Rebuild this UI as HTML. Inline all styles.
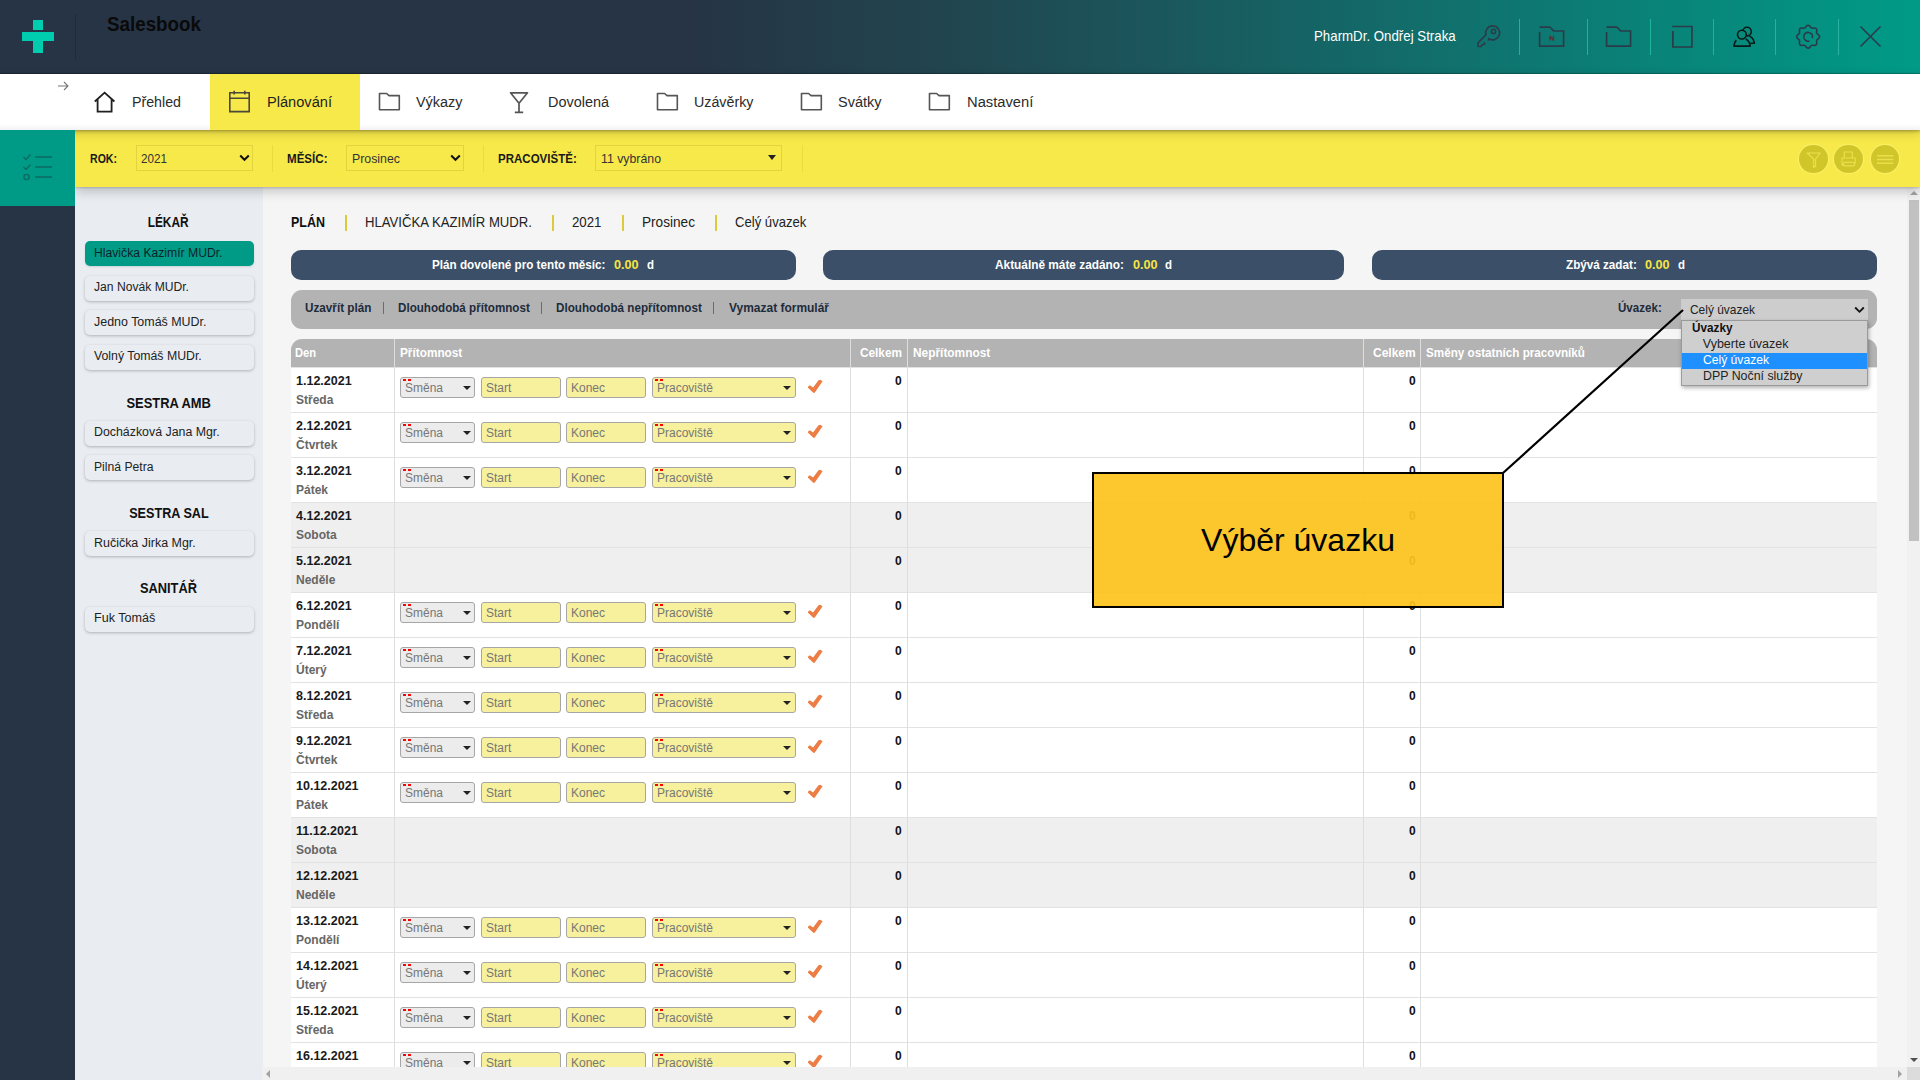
<!DOCTYPE html><html><head><meta charset="utf-8"><style>
*{box-sizing:border-box;margin:0;padding:0}
html,body{width:1920px;height:1080px;overflow:hidden;font-family:"Liberation Sans",sans-serif;background:#f5f5f5;color:#212529}
.abs{position:absolute}
.t{position:absolute;white-space:nowrap}
.t>span{display:inline-block;transform-origin:0 50%}
.tc>span{transform-origin:50% 50%}
#hdr{position:absolute;left:0;top:0;width:1920px;height:74px;background:linear-gradient(90deg,#263445 0%,#263445 36%,#214650 50%,#136a69 72%,#009b87 100%);}
#hdrb{position:absolute;left:0;top:73px;width:1920px;height:1px;background:rgba(0,0,0,.18)}
#nav{position:absolute;left:0;top:74px;width:1920px;height:56px;background:linear-gradient(180deg,#fff 0,#fff 50px,#f3f3f6 56px);z-index:6;box-shadow:0 1px 3px rgba(0,0,0,.3),0 3px 10px rgba(0,0,0,.18)}
#filt{position:absolute;left:75px;top:130px;width:1845px;height:57px;background:#f7e94a;box-shadow:0 1px 2px rgba(0,0,0,.15),0 4px 11px rgba(0,0,0,.22);z-index:5}
#lteal{position:absolute;left:0;top:130px;width:75px;height:76px;background:#009b87;z-index:7}
#ldark{position:absolute;left:0;top:206px;width:75px;height:874px;background:#263445;z-index:7}
#emp{position:absolute;left:75px;top:187px;width:188px;height:893px;background:#e9edf1}
.z8{z-index:8}.z9{z-index:9}
.fsel{position:absolute;top:145px;height:26px;border:1px solid #e2d43e;z-index:9}
.fdiv{position:absolute;top:145px;width:1px;height:27px;background:#e9dc40;z-index:9}
.eb{position:absolute;left:85px;width:169px;height:25px;border-radius:5px;background:#e9edf1;box-shadow:0 1px 3px rgba(0,0,0,.25)}
.eb.act{background:#009b87;box-shadow:0 1px 2px rgba(0,0,0,.12)}
.bsep{position:absolute;top:215px;width:1.6px;height:16px;background:#dccb38}
.info{position:absolute;top:250px;height:30px;background:#3b5068;border-radius:10px}
#act{position:absolute;left:291px;top:290px;width:1586px;height:39px;background:#b3b3b3;border-radius:11px}
.asep{position:absolute;top:302px;width:1px;height:12px;background:#6a6a7a}
#thd{position:absolute;left:291px;top:339px;width:1586px;height:28px;background:#b3b3b3;border-radius:11px 11px 0 0}
.tdiv{position:absolute;width:1px;background:#dedede}
.row{position:absolute;left:291px;width:1586px;height:45px;background:#fff;border-top:1px solid #e2e2e2}
.row.we{background:#efefef}
.d1{position:absolute;left:5px;top:6px;font-size:12.5px;font-weight:bold;color:#1a1a1a;line-height:15px}
.d2{position:absolute;left:5px;top:25px;font-size:12px;font-weight:bold;color:#666;line-height:15px}
.z{position:absolute;top:6px;font-size:12px;font-weight:bold;color:#111;line-height:15px}
.inp{position:absolute;top:9px;height:21px;border:1px solid #a6a6a6;border-radius:3px;font-size:12px;color:#777;line-height:21px;padding-left:4px}
.sel{background:#ececec}
.yel{background:#f7f09c}
.tri{position:absolute;top:8px;width:0;height:0;border-left:4px solid transparent;border-right:4px solid transparent;border-top:4px solid #222}
.rd{position:absolute;left:2px;top:1px;width:8px;height:2px;background:linear-gradient(90deg,#f00 0,#f00 3px,transparent 3px,transparent 5px,#f00 5px,#f00 8px)}
.chk{position:absolute;left:516px;top:11px}
</style></head><body><div id="hdr"></div><div id="hdrb"></div>
<svg class="abs" style="left:22px;top:20px" width="32" height="33" viewBox="0 0 32 33"><rect x="11" y="0" width="10" height="10" fill="#00cdb0"/><rect x="0" y="12" width="32" height="9" fill="#00cdb0"/><rect x="11" y="21" width="10" height="12" fill="#00cdb0"/></svg>
<div class="abs" style="left:75px;top:14px;width:1px;height:46px;background:#1f2b39"></div>
<div class="t" style="top:11.30px;font-size:20.8px;line-height:25px;color:#0a0a0a;font-weight:bold;left:107px;"><span id="t0" style="transform:scaleX(0.9036)">Salesbook</span></div>
<div class="t" style="top:26.80px;font-size:14.2px;line-height:18px;color:#fff;left:1314px;"><span id="t1" style="transform:scaleX(0.9360)">PharmDr. Ondřej Straka</span></div>
<div class="abs" style="left:1519px;top:19px;width:1px;height:36px;background:rgba(40,200,170,.72)"></div>
<div class="abs" style="left:1587px;top:19px;width:1px;height:36px;background:rgba(40,200,170,.72)"></div>
<div class="abs" style="left:1650px;top:19px;width:1px;height:36px;background:rgba(40,200,170,.72)"></div>
<div class="abs" style="left:1713px;top:19px;width:1px;height:36px;background:rgba(90,215,195,.45)"></div>
<div class="abs" style="left:1775px;top:19px;width:1px;height:36px;background:rgba(90,215,195,.45)"></div>
<div class="abs" style="left:1838px;top:19px;width:1px;height:36px;background:rgba(90,215,195,.45)"></div>
<svg class="abs" style="left:1472px;top:20px" width="32" height="32" viewBox="0 0 32 32"><path d="M13.9 14.8 A7 7 0 1 1 16.9 18.8 Q16.6 19.6 16.4 20" fill="none" stroke="#2a3c4a" stroke-width="1.6" stroke-linecap="round"/><path d="M12.4 21.9 V24.3 L9.9 25 L9 26.5 H6 V22.9 L13.9 14.8" fill="none" stroke="#2a3c4a" stroke-width="1.6" stroke-linejoin="round"/><circle cx="21.5" cy="11.4" r="2.1" fill="none" stroke="#2a3c4a" stroke-width="1.5"/></svg>
<svg class="abs" style="left:1536px;top:20px" width="32" height="32" viewBox="0 0 32 32"><path d="M3.6 7.1 H13.3 Q14.5 7.1 15.5 8.6 L16.4 9.8 Q17.2 11 18.5 11 H27.6 V26.1 H3.6 V12.1" fill="none" stroke="#2a3c4a" stroke-width="1.7"/><path d="M14 20.6 V15.9 L17.4 20.6 V15.9" fill="none" stroke="#5a3434" stroke-width="1.5" stroke-linejoin="bevel"/></svg>
<svg class="abs" style="left:1603px;top:20px" width="32" height="32" viewBox="0 0 32 32"><path d="M3.6 7.1 H13.3 Q14.5 7.1 15.5 8.6 L16.4 9.8 Q17.2 11 18.5 11 H27.6 V26.1 H3.6 V12.1" fill="none" stroke="#2a3c4a" stroke-width="1.7"/></svg>
<svg class="abs" style="left:1671px;top:25px" width="23" height="24" viewBox="0 0 23 24"><path d="M1.2 1.5 H20.9 V22 H1.9 V6" fill="none" stroke="#2a3c4a" stroke-width="1.7"/></svg>
<svg class="abs" style="left:1728px;top:20px" width="32" height="32" viewBox="0 0 32 32"><circle cx="19" cy="11.6" r="4.3" fill="none" stroke="#0a1a18" stroke-width="1.6"/><path d="M21.3 16.2 Q25.6 17.6 26.4 23.2 H22.5" fill="none" stroke="#0a1a18" stroke-width="1.6" stroke-linejoin="round"/><circle cx="13.9" cy="14.6" r="4.4" fill="#078a7a" stroke="#0a1a18" stroke-width="1.6"/><path d="M8.3 20.1 Q6.2 22.3 5.9 26.1 H22.2 Q21.8 21.2 17.8 19" fill="none" stroke="#0a1a18" stroke-width="1.6" stroke-linejoin="round"/></svg>
<svg class="abs" style="left:1792px;top:20px" width="32" height="32" viewBox="0 0 32 32"><path d="M27.55 16.70 L27.39 17.44 L26.93 18.13 L26.30 18.73 L25.64 19.26 L25.09 19.75 L24.74 20.28 L24.61 20.90 L24.65 21.64 L24.75 22.48 L24.77 23.35 L24.60 24.16 L24.20 24.80 L23.56 25.20 L22.75 25.37 L21.88 25.35 L21.04 25.25 L20.30 25.21 L19.68 25.34 L19.15 25.69 L18.66 26.24 L18.13 26.90 L17.53 27.53 L16.84 27.99 L16.10 28.15 L15.36 27.99 L14.67 27.53 L14.07 26.90 L13.54 26.24 L13.05 25.69 L12.52 25.34 L11.90 25.21 L11.16 25.25 L10.32 25.35 L9.45 25.37 L8.64 25.20 L8.00 24.80 L7.60 24.16 L7.43 23.35 L7.45 22.48 L7.55 21.64 L7.59 20.90 L7.46 20.28 L7.11 19.75 L6.56 19.26 L5.90 18.73 L5.27 18.13 L4.81 17.44 L4.65 16.70 L4.81 15.96 L5.27 15.27 L5.90 14.67 L6.56 14.14 L7.11 13.65 L7.46 13.12 L7.59 12.50 L7.55 11.76 L7.45 10.92 L7.43 10.05 L7.60 9.24 L8.00 8.60 L8.64 8.20 L9.45 8.03 L10.32 8.05 L11.16 8.15 L11.90 8.19 L12.52 8.06 L13.05 7.71 L13.54 7.16 L14.07 6.50 L14.67 5.87 L15.36 5.41 L16.10 5.25 L16.84 5.41 L17.53 5.87 L18.13 6.50 L18.66 7.16 L19.15 7.71 L19.68 8.06 L20.30 8.19 L21.04 8.15 L21.88 8.05 L22.75 8.03 L23.56 8.20 L24.20 8.60 L24.60 9.24 L24.77 10.05 L24.75 10.92 L24.65 11.76 L24.61 12.50 L24.74 13.12 L25.09 13.65 L25.64 14.14 L26.30 14.67 L26.93 15.27 L27.39 15.96 Z" fill="none" stroke="#2a3c4a" stroke-width="1.6" stroke-linejoin="round"/><path d="M20.3 18.3 A4.4 4.4 0 1 0 17.5 21" fill="none" stroke="#2a3c4a" stroke-width="1.6"/></svg>
<svg class="abs" style="left:1859px;top:25px" width="23" height="23" viewBox="0 0 23 23"><path d="M1.5 1.5 L21.5 21.5 M21.5 1.5 L1.5 21.5" stroke="#2a3c4a" stroke-width="1.6"/></svg>
<div id="nav"></div>
<div class="abs" style="left:210px;top:74px;width:150px;height:56px;background:#f7e94a;z-index:7"></div>
<svg class="abs z8" style="left:56px;top:80px" width="14" height="12" viewBox="0 0 14 12"><path d="M2 6 H12 M8 2 L12 6 L8 10" fill="none" stroke="#777" stroke-width="1.1"/></svg>
<svg class="abs z8" style="left:93px;top:91px" width="24" height="22" viewBox="0 0 24 22"><path d="M1.8 10.5 L11.6 1.6 L21.4 10.5 M4.6 8.5 V20.6 H18.6 V8.5" fill="none" stroke="#1f1f1f" stroke-width="1.8" stroke-linejoin="miter"/></svg>
<div class="t z8" style="top:92.20px;font-size:15.2px;line-height:19px;color:#2b2b2b;left:132px;"><span id="t2" style="transform:scaleX(0.9358)">Přehled</span></div>
<svg class="abs z8" style="left:228px;top:90px" width="24" height="23" viewBox="0 0 24 23"><path d="M1.8 2.8 H21.2 V21.6 H1.8 Z M1.8 8.2 H21.2 M6.2 0.8 V4.5 M16.8 0.8 V4.5" fill="none" stroke="#4a4836" stroke-width="1.6"/></svg>
<div class="t z8" style="top:92.20px;font-size:15.2px;line-height:19px;color:#1f1f1f;left:266.7px;"><span id="t3" style="transform:scaleX(0.9621)">Plánování</span></div>
<svg class="abs z8" style="left:378px;top:92px" width="23" height="20" viewBox="0 0 23 20"><path d="M1.5 1.5 H8.6 L11 3.6 H21.3 V17.8 H1.5 Z" fill="none" stroke="#555" stroke-width="1.6" stroke-linejoin="round"/></svg>
<div class="t z8" style="top:92.20px;font-size:15.2px;line-height:19px;color:#2b2b2b;left:416.3px;"><span id="t4" style="transform:scaleX(0.9499)">Výkazy</span></div>
<svg class="abs z8" style="left:508px;top:91px" width="22" height="23" viewBox="0 0 22 23"><path d="M2.5 1.8 H19.5 L11 12.2 Z M11 12.2 V21.3 M6.8 21.3 H15.2" fill="none" stroke="#555" stroke-width="1.7" stroke-linejoin="round"/></svg>
<div class="t z8" style="top:92.20px;font-size:15.2px;line-height:19px;color:#2b2b2b;left:547.6px;"><span id="t5" style="transform:scaleX(0.9506)">Dovolená</span></div>
<svg class="abs z8" style="left:656px;top:92px" width="23" height="20" viewBox="0 0 23 20"><path d="M1.5 1.5 H8.6 L11 3.6 H21.3 V17.8 H1.5 Z" fill="none" stroke="#555" stroke-width="1.6" stroke-linejoin="round"/></svg>
<div class="t z8" style="top:92.20px;font-size:15.2px;line-height:19px;color:#2b2b2b;left:694px;"><span id="t6" style="transform:scaleX(0.9384)">Uzávěrky</span></div>
<svg class="abs z8" style="left:800px;top:92px" width="23" height="20" viewBox="0 0 23 20"><path d="M1.5 1.5 H8.6 L11 3.6 H21.3 V17.8 H1.5 Z" fill="none" stroke="#555" stroke-width="1.6" stroke-linejoin="round"/></svg>
<div class="t z8" style="top:92.20px;font-size:15.2px;line-height:19px;color:#2b2b2b;left:838.2px;"><span id="t7" style="transform:scaleX(0.9544)">Svátky</span></div>
<svg class="abs z8" style="left:928px;top:92px" width="23" height="20" viewBox="0 0 23 20"><path d="M1.5 1.5 H8.6 L11 3.6 H21.3 V17.8 H1.5 Z" fill="none" stroke="#555" stroke-width="1.6" stroke-linejoin="round"/></svg>
<div class="t z8" style="top:92.20px;font-size:15.2px;line-height:19px;color:#2b2b2b;left:966.7px;"><span id="t8" style="transform:scaleX(0.9694)">Nastavení</span></div>
<div id="lteal"></div><div id="ldark"></div>
<svg class="abs" style="left:22px;top:153px;z-index:8" width="32" height="28" viewBox="0 0 32 28"><path d="M1.5 4 L4 6.5 L8.5 1.5 M1.5 14 L4 16.5 L8.5 11.5" fill="none" stroke="#0b6b60" stroke-width="1.4"/><circle cx="4.5" cy="24" r="2.6" fill="none" stroke="#0b6b60" stroke-width="1.4"/><path d="M13 4 H30 M13 14 H30 M13 24 H30" stroke="#0b6b60" stroke-width="1.4"/></svg>
<div id="filt"></div>
<div class="t z9" style="top:149.70px;font-size:13.4px;line-height:17px;color:#1a1a1a;font-weight:bold;left:89.6px;"><span id="t9" style="transform:scaleX(0.7890)">ROK:</span></div>
<div class="fsel" style="left:136px;width:117px"></div>
<div class="t z9" style="top:150.70px;font-size:12.6px;line-height:16px;color:#333;left:141px;"><span id="t10" style="transform:scaleX(0.9275)">2021</span></div>
<svg class="abs z9" style="left:238.5px;top:154px" width="11" height="8" viewBox="0 0 11 8"><path d="M1.2 1.5 L5.5 5.8 L9.8 1.5" fill="none" stroke="#111" stroke-width="2"/></svg>
<div class="fdiv" style="left:272px"></div>
<div class="t z9" style="top:149.70px;font-size:13.4px;line-height:17px;color:#1a1a1a;font-weight:bold;left:287px;"><span id="t11" style="transform:scaleX(0.8640)">MĚSÍC:</span></div>
<div class="fsel" style="left:346px;width:118px"></div>
<div class="t z9" style="top:150.70px;font-size:12.6px;line-height:16px;color:#333;left:351.7px;"><span id="t12" style="transform:scaleX(0.9796)">Prosinec</span></div>
<svg class="abs z9" style="left:450px;top:154px" width="11" height="8" viewBox="0 0 11 8"><path d="M1.2 1.5 L5.5 5.8 L9.8 1.5" fill="none" stroke="#111" stroke-width="2"/></svg>
<div class="fdiv" style="left:483px"></div>
<div class="t z9" style="top:149.70px;font-size:13.4px;line-height:17px;color:#1a1a1a;font-weight:bold;left:497.5px;"><span id="t13" style="transform:scaleX(0.8605)">PRACOVIŠTĚ:</span></div>
<div class="fsel" style="left:595px;width:187px"></div>
<div class="t z9" style="top:150.70px;font-size:12.6px;line-height:16px;color:#333;left:601px;"><span id="t14" style="transform:scaleX(0.9773)">11 vybráno</span></div>
<div class="abs z9" style="left:768px;top:155px;width:0;height:0;border-left:4px solid transparent;border-right:4px solid transparent;border-top:5px solid #222"></div>
<div class="fdiv" style="left:802px"></div>
<div class="abs z9" style="left:1799.3px;top:144.8px;width:28.6px;height:28.6px;border-radius:50%;background:#d0c62a;box-shadow:0 0 1.5px 1px rgba(255,248,130,.55)"></div>
<div class="abs z9" style="left:1834.3px;top:144.8px;width:28.6px;height:28.6px;border-radius:50%;background:#d0c62a;box-shadow:0 0 1.5px 1px rgba(255,248,130,.55)"></div>
<div class="abs z9" style="left:1870.7px;top:144.8px;width:28.6px;height:28.6px;border-radius:50%;background:#d0c62a;box-shadow:0 0 1.5px 1px rgba(255,248,130,.55)"></div>
<svg class="abs z9" style="left:1803px;top:150px" width="20" height="20" viewBox="0 0 20 20"><path d="M4 3 H17.2 L12.6 9 V16.4 L10.6 17.4 V9 Z" fill="none" stroke="#e9df4c" stroke-width="1.2" stroke-linejoin="round"/></svg>
<svg class="abs z9" style="left:1839px;top:150px" width="20" height="20" viewBox="0 0 20 20"><path d="M5.3 8 V2 H13.3 V8 M3 10.5 V8 H16.2 V13.5 M3 10.5 V14.5 Q3 15.6 4.5 15.6 M6 12.3 H13.9 Q15.6 12.3 15.6 14.2 Q15.6 15.9 13.9 15.9 H6 Q4.4 15.9 4.4 14.1 Q4.4 12.3 6 12.3 Z" fill="none" stroke="#e9df4c" stroke-width="1.2"/></svg>
<svg class="abs z9" style="left:1876px;top:150px" width="20" height="20" viewBox="0 0 20 20"><path d="M1 5.8 H17.3 M1 9.5 H17.3 M1 13.2 H17.3" stroke="#e9df4c" stroke-width="1.6"/></svg>
<div id="emp"></div>
<div class="t tc" style="top:213.30px;font-size:14.6px;line-height:18px;color:#111;font-weight:bold;left:75px;width:187px;text-align:center;"><span id="t15" style="transform:scaleX(0.8154)">LÉKAŘ</span></div>
<div class="eb act" style="top:241px"></div>
<div class="t" style="top:245.70px;font-size:12.3px;line-height:15px;color:#0e1f2a;left:94px;"><span id="t16" style="transform:scaleX(0.9898)">Hlavička Kazimír MUDr.</span></div>
<div class="eb" style="top:275.5px"></div>
<div class="t" style="top:280.20px;font-size:12.3px;line-height:15px;color:#222;left:94px;"><span id="t17" style="transform:scaleX(0.9859)">Jan Novák MUDr.</span></div>
<div class="eb" style="top:310px"></div>
<div class="t" style="top:314.70px;font-size:12.3px;line-height:15px;color:#222;left:94px;"><span id="t18" style="transform:scaleX(1.0119)">Jedno Tomáš MUDr.</span></div>
<div class="eb" style="top:344.5px"></div>
<div class="t" style="top:349.20px;font-size:12.3px;line-height:15px;color:#222;left:94px;"><span id="t19">Volný Tomáš MUDr.</span></div>
<div class="t tc" style="top:393.50px;font-size:14.6px;line-height:18px;color:#111;font-weight:bold;left:75px;width:187px;text-align:center;"><span id="t20" style="transform:scaleX(0.8857)">SESTRA AMB</span></div>
<div class="eb" style="top:420.5px"></div>
<div class="t" style="top:425.20px;font-size:12.3px;line-height:15px;color:#222;left:94px;"><span id="t21" style="transform:scaleX(1.0052)">Docházková Jana Mgr.</span></div>
<div class="eb" style="top:455px"></div>
<div class="t" style="top:459.70px;font-size:12.3px;line-height:15px;color:#222;left:94px;"><span id="t22" style="transform:scaleX(0.9891)">Pilná Petra</span></div>
<div class="t tc" style="top:503.50px;font-size:14.6px;line-height:18px;color:#111;font-weight:bold;left:75px;width:187px;text-align:center;"><span id="t23" style="transform:scaleX(0.8650)">SESTRA SAL</span></div>
<div class="eb" style="top:531px"></div>
<div class="t" style="top:535.70px;font-size:12.3px;line-height:15px;color:#222;left:94px;"><span id="t24" style="transform:scaleX(1.0129)">Ručička Jirka Mgr.</span></div>
<div class="t tc" style="top:579.00px;font-size:14.6px;line-height:18px;color:#111;font-weight:bold;left:75px;width:187px;text-align:center;"><span id="t25" style="transform:scaleX(0.8786)">SANITÁŘ</span></div>
<div class="eb" style="top:606.5px"></div>
<div class="t" style="top:611.20px;font-size:12.3px;line-height:15px;color:#222;left:94px;"><span id="t26" style="transform:scaleX(1.0222)">Fuk Tomáš</span></div>
<div class="t" style="top:213.10px;font-size:14.4px;line-height:18px;color:#111;font-weight:bold;left:291px;"><span id="t27" style="transform:scaleX(0.8676)">PLÁN</span></div>
<div class="bsep" style="left:345px"></div>
<div class="bsep" style="left:552px"></div>
<div class="bsep" style="left:622px"></div>
<div class="bsep" style="left:715px"></div>
<div class="t" style="top:213.10px;font-size:14.4px;line-height:18px;color:#222;left:365.4px;"><span id="t28" style="transform:scaleX(0.9133)">HLAVIČKA KAZIMÍR MUDR.</span></div>
<div class="t" style="top:213.10px;font-size:14.4px;line-height:18px;color:#222;left:572px;"><span id="t29" style="transform:scaleX(0.9214)">2021</span></div>
<div class="t" style="top:213.10px;font-size:14.4px;line-height:18px;color:#222;left:642.4px;"><span id="t30" style="transform:scaleX(0.9464)">Prosinec</span></div>
<div class="t" style="top:213.10px;font-size:14.4px;line-height:18px;color:#222;left:735.4px;"><span id="t31" style="transform:scaleX(0.9108)">Celý úvazek</span></div>
<div class="info" style="left:291px;width:505px"></div>
<div class="info" style="left:823px;width:521px"></div>
<div class="info" style="left:1372px;width:505px"></div>
<div class="t" style="top:256.10px;font-size:13.4px;line-height:17px;color:#fff;font-weight:bold;left:432.2px;"><span id="t32" style="transform:scaleX(0.8733)">Plán dovolené pro tento měsíc:</span></div>
<div class="t" style="top:256.10px;font-size:13.4px;line-height:17px;color:#f5e642;font-weight:bold;left:613.8px;"><span id="t33" style="transform:scaleX(0.9439)">0.00</span></div>
<div class="t" style="top:256.10px;font-size:13.4px;line-height:17px;color:#fff;font-weight:bold;left:646.8px;"><span id="t34" style="transform:scaleX(0.8550)">d</span></div>
<div class="t" style="top:256.10px;font-size:13.4px;line-height:17px;color:#fff;font-weight:bold;left:995.3px;"><span id="t35" style="transform:scaleX(0.8845)">Aktuálně máte zadáno:</span></div>
<div class="t" style="top:256.10px;font-size:13.4px;line-height:17px;color:#f5e642;font-weight:bold;left:1132.7px;"><span id="t36" style="transform:scaleX(0.9439)">0.00</span></div>
<div class="t" style="top:256.10px;font-size:13.4px;line-height:17px;color:#fff;font-weight:bold;left:1165px;"><span id="t37" style="transform:scaleX(0.8550)">d</span></div>
<div class="t" style="top:256.10px;font-size:13.4px;line-height:17px;color:#fff;font-weight:bold;left:1565.5px;"><span id="t38" style="transform:scaleX(0.8729)">Zbývá zadat:</span></div>
<div class="t" style="top:256.10px;font-size:13.4px;line-height:17px;color:#f5e642;font-weight:bold;left:1645.1px;"><span id="t39" style="transform:scaleX(0.9439)">0.00</span></div>
<div class="t" style="top:256.10px;font-size:13.4px;line-height:17px;color:#fff;font-weight:bold;left:1677.7px;"><span id="t40" style="transform:scaleX(0.8550)">d</span></div>
<div id="act"></div>
<div class="t" style="top:299.90px;font-size:13.1px;line-height:16px;color:#1e2b3b;font-weight:bold;left:304.6px;"><span id="t41" style="transform:scaleX(0.8947)">Uzavřít plán</span></div>
<div class="asep" style="left:382.5px"></div>
<div class="t" style="top:299.90px;font-size:13.1px;line-height:16px;color:#1e2b3b;font-weight:bold;left:397.9px;"><span id="t42" style="transform:scaleX(0.8883)">Dlouhodobá přítomnost</span></div>
<div class="asep" style="left:540.5px"></div>
<div class="t" style="top:299.90px;font-size:13.1px;line-height:16px;color:#1e2b3b;font-weight:bold;left:555.9px;"><span id="t43" style="transform:scaleX(0.8909)">Dlouhodobá nepřítomnost</span></div>
<div class="asep" style="left:712.5px"></div>
<div class="t" style="top:299.90px;font-size:13.1px;line-height:16px;color:#1e2b3b;font-weight:bold;left:728.8px;"><span id="t44" style="transform:scaleX(0.9140)">Vymazat formulář</span></div>
<div class="t" style="top:299.90px;font-size:13.1px;line-height:16px;color:#1e2b3b;font-weight:bold;left:1617.5px;"><span id="t45" style="transform:scaleX(0.8838)">Úvazek:</span></div>
<div id="thd"></div>
<div class="t" style="top:345.80px;font-size:12.4px;line-height:15px;color:#fff;font-weight:bold;left:295.3px;"><span id="t46" style="transform:scaleX(0.8966)">Den</span></div>
<div class="t" style="top:345.80px;font-size:12.4px;line-height:15px;color:#fff;font-weight:bold;left:399.7px;"><span id="t47" style="transform:scaleX(0.9525)">Přítomnost</span></div>
<div class="t" style="top:345.80px;font-size:12.4px;line-height:15px;color:#fff;font-weight:bold;left:860px;"><span id="t48" style="transform:scaleX(0.9525)">Celkem</span></div>
<div class="t" style="top:345.80px;font-size:12.4px;line-height:15px;color:#fff;font-weight:bold;left:912.7px;"><span id="t49" style="transform:scaleX(0.9597)">Nepřítomnost</span></div>
<div class="t" style="top:345.80px;font-size:12.4px;line-height:15px;color:#fff;font-weight:bold;left:1373px;"><span id="t50" style="transform:scaleX(0.9684)">Celkem</span></div>
<div class="t" style="top:345.80px;font-size:12.4px;line-height:15px;color:#fff;font-weight:bold;left:1426px;"><span id="t51" style="transform:scaleX(0.9425)">Směny ostatních pracovníků</span></div>
<div class="row" style="top:367px"><div class="d1">1.12.2021</div><div class="d2">Středa</div><div class="inp sel" style="left:109px;width:75px"><div class="rd"></div>Směna<div class="tri" style="left:62px"></div></div><div class="inp yel" style="left:190px;width:80px">Start</div><div class="inp yel" style="left:275px;width:80px">Konec</div><div class="inp yel" style="left:361px;width:144px"><div class="rd"></div>Pracoviště<div class="tri" style="left:130px"></div></div><svg class="chk" width="17" height="15" viewBox="0 0 17 15"><path d="M0.8 8.6 Q1.5 6 3.2 6.6 L6.1 8.6 L11.3 1.6 Q12.5 0.6 13.6 0.9 L15.6 2.2 L8 13.3 Q7 14.4 6 13.4 Z" fill="#ec7d44"/></svg><div class="z" style="left:604px">0</div><div class="z" style="left:1118px">0</div></div>
<div class="row" style="top:412px"><div class="d1">2.12.2021</div><div class="d2">Čtvrtek</div><div class="inp sel" style="left:109px;width:75px"><div class="rd"></div>Směna<div class="tri" style="left:62px"></div></div><div class="inp yel" style="left:190px;width:80px">Start</div><div class="inp yel" style="left:275px;width:80px">Konec</div><div class="inp yel" style="left:361px;width:144px"><div class="rd"></div>Pracoviště<div class="tri" style="left:130px"></div></div><svg class="chk" width="17" height="15" viewBox="0 0 17 15"><path d="M0.8 8.6 Q1.5 6 3.2 6.6 L6.1 8.6 L11.3 1.6 Q12.5 0.6 13.6 0.9 L15.6 2.2 L8 13.3 Q7 14.4 6 13.4 Z" fill="#ec7d44"/></svg><div class="z" style="left:604px">0</div><div class="z" style="left:1118px">0</div></div>
<div class="row" style="top:457px"><div class="d1">3.12.2021</div><div class="d2">Pátek</div><div class="inp sel" style="left:109px;width:75px"><div class="rd"></div>Směna<div class="tri" style="left:62px"></div></div><div class="inp yel" style="left:190px;width:80px">Start</div><div class="inp yel" style="left:275px;width:80px">Konec</div><div class="inp yel" style="left:361px;width:144px"><div class="rd"></div>Pracoviště<div class="tri" style="left:130px"></div></div><svg class="chk" width="17" height="15" viewBox="0 0 17 15"><path d="M0.8 8.6 Q1.5 6 3.2 6.6 L6.1 8.6 L11.3 1.6 Q12.5 0.6 13.6 0.9 L15.6 2.2 L8 13.3 Q7 14.4 6 13.4 Z" fill="#ec7d44"/></svg><div class="z" style="left:604px">0</div><div class="z" style="left:1118px">0</div></div>
<div class="row we" style="top:502px"><div class="d1">4.12.2021</div><div class="d2">Sobota</div><div class="z" style="left:604px">0</div><div class="z" style="left:1118px">0</div></div>
<div class="row we" style="top:547px"><div class="d1">5.12.2021</div><div class="d2">Neděle</div><div class="z" style="left:604px">0</div><div class="z" style="left:1118px">0</div></div>
<div class="row" style="top:592px"><div class="d1">6.12.2021</div><div class="d2">Pondělí</div><div class="inp sel" style="left:109px;width:75px"><div class="rd"></div>Směna<div class="tri" style="left:62px"></div></div><div class="inp yel" style="left:190px;width:80px">Start</div><div class="inp yel" style="left:275px;width:80px">Konec</div><div class="inp yel" style="left:361px;width:144px"><div class="rd"></div>Pracoviště<div class="tri" style="left:130px"></div></div><svg class="chk" width="17" height="15" viewBox="0 0 17 15"><path d="M0.8 8.6 Q1.5 6 3.2 6.6 L6.1 8.6 L11.3 1.6 Q12.5 0.6 13.6 0.9 L15.6 2.2 L8 13.3 Q7 14.4 6 13.4 Z" fill="#ec7d44"/></svg><div class="z" style="left:604px">0</div><div class="z" style="left:1118px">0</div></div>
<div class="row" style="top:637px"><div class="d1">7.12.2021</div><div class="d2">Úterý</div><div class="inp sel" style="left:109px;width:75px"><div class="rd"></div>Směna<div class="tri" style="left:62px"></div></div><div class="inp yel" style="left:190px;width:80px">Start</div><div class="inp yel" style="left:275px;width:80px">Konec</div><div class="inp yel" style="left:361px;width:144px"><div class="rd"></div>Pracoviště<div class="tri" style="left:130px"></div></div><svg class="chk" width="17" height="15" viewBox="0 0 17 15"><path d="M0.8 8.6 Q1.5 6 3.2 6.6 L6.1 8.6 L11.3 1.6 Q12.5 0.6 13.6 0.9 L15.6 2.2 L8 13.3 Q7 14.4 6 13.4 Z" fill="#ec7d44"/></svg><div class="z" style="left:604px">0</div><div class="z" style="left:1118px">0</div></div>
<div class="row" style="top:682px"><div class="d1">8.12.2021</div><div class="d2">Středa</div><div class="inp sel" style="left:109px;width:75px"><div class="rd"></div>Směna<div class="tri" style="left:62px"></div></div><div class="inp yel" style="left:190px;width:80px">Start</div><div class="inp yel" style="left:275px;width:80px">Konec</div><div class="inp yel" style="left:361px;width:144px"><div class="rd"></div>Pracoviště<div class="tri" style="left:130px"></div></div><svg class="chk" width="17" height="15" viewBox="0 0 17 15"><path d="M0.8 8.6 Q1.5 6 3.2 6.6 L6.1 8.6 L11.3 1.6 Q12.5 0.6 13.6 0.9 L15.6 2.2 L8 13.3 Q7 14.4 6 13.4 Z" fill="#ec7d44"/></svg><div class="z" style="left:604px">0</div><div class="z" style="left:1118px">0</div></div>
<div class="row" style="top:727px"><div class="d1">9.12.2021</div><div class="d2">Čtvrtek</div><div class="inp sel" style="left:109px;width:75px"><div class="rd"></div>Směna<div class="tri" style="left:62px"></div></div><div class="inp yel" style="left:190px;width:80px">Start</div><div class="inp yel" style="left:275px;width:80px">Konec</div><div class="inp yel" style="left:361px;width:144px"><div class="rd"></div>Pracoviště<div class="tri" style="left:130px"></div></div><svg class="chk" width="17" height="15" viewBox="0 0 17 15"><path d="M0.8 8.6 Q1.5 6 3.2 6.6 L6.1 8.6 L11.3 1.6 Q12.5 0.6 13.6 0.9 L15.6 2.2 L8 13.3 Q7 14.4 6 13.4 Z" fill="#ec7d44"/></svg><div class="z" style="left:604px">0</div><div class="z" style="left:1118px">0</div></div>
<div class="row" style="top:772px"><div class="d1">10.12.2021</div><div class="d2">Pátek</div><div class="inp sel" style="left:109px;width:75px"><div class="rd"></div>Směna<div class="tri" style="left:62px"></div></div><div class="inp yel" style="left:190px;width:80px">Start</div><div class="inp yel" style="left:275px;width:80px">Konec</div><div class="inp yel" style="left:361px;width:144px"><div class="rd"></div>Pracoviště<div class="tri" style="left:130px"></div></div><svg class="chk" width="17" height="15" viewBox="0 0 17 15"><path d="M0.8 8.6 Q1.5 6 3.2 6.6 L6.1 8.6 L11.3 1.6 Q12.5 0.6 13.6 0.9 L15.6 2.2 L8 13.3 Q7 14.4 6 13.4 Z" fill="#ec7d44"/></svg><div class="z" style="left:604px">0</div><div class="z" style="left:1118px">0</div></div>
<div class="row we" style="top:817px"><div class="d1">11.12.2021</div><div class="d2">Sobota</div><div class="z" style="left:604px">0</div><div class="z" style="left:1118px">0</div></div>
<div class="row we" style="top:862px"><div class="d1">12.12.2021</div><div class="d2">Neděle</div><div class="z" style="left:604px">0</div><div class="z" style="left:1118px">0</div></div>
<div class="row" style="top:907px"><div class="d1">13.12.2021</div><div class="d2">Pondělí</div><div class="inp sel" style="left:109px;width:75px"><div class="rd"></div>Směna<div class="tri" style="left:62px"></div></div><div class="inp yel" style="left:190px;width:80px">Start</div><div class="inp yel" style="left:275px;width:80px">Konec</div><div class="inp yel" style="left:361px;width:144px"><div class="rd"></div>Pracoviště<div class="tri" style="left:130px"></div></div><svg class="chk" width="17" height="15" viewBox="0 0 17 15"><path d="M0.8 8.6 Q1.5 6 3.2 6.6 L6.1 8.6 L11.3 1.6 Q12.5 0.6 13.6 0.9 L15.6 2.2 L8 13.3 Q7 14.4 6 13.4 Z" fill="#ec7d44"/></svg><div class="z" style="left:604px">0</div><div class="z" style="left:1118px">0</div></div>
<div class="row" style="top:952px"><div class="d1">14.12.2021</div><div class="d2">Úterý</div><div class="inp sel" style="left:109px;width:75px"><div class="rd"></div>Směna<div class="tri" style="left:62px"></div></div><div class="inp yel" style="left:190px;width:80px">Start</div><div class="inp yel" style="left:275px;width:80px">Konec</div><div class="inp yel" style="left:361px;width:144px"><div class="rd"></div>Pracoviště<div class="tri" style="left:130px"></div></div><svg class="chk" width="17" height="15" viewBox="0 0 17 15"><path d="M0.8 8.6 Q1.5 6 3.2 6.6 L6.1 8.6 L11.3 1.6 Q12.5 0.6 13.6 0.9 L15.6 2.2 L8 13.3 Q7 14.4 6 13.4 Z" fill="#ec7d44"/></svg><div class="z" style="left:604px">0</div><div class="z" style="left:1118px">0</div></div>
<div class="row" style="top:997px"><div class="d1">15.12.2021</div><div class="d2">Středa</div><div class="inp sel" style="left:109px;width:75px"><div class="rd"></div>Směna<div class="tri" style="left:62px"></div></div><div class="inp yel" style="left:190px;width:80px">Start</div><div class="inp yel" style="left:275px;width:80px">Konec</div><div class="inp yel" style="left:361px;width:144px"><div class="rd"></div>Pracoviště<div class="tri" style="left:130px"></div></div><svg class="chk" width="17" height="15" viewBox="0 0 17 15"><path d="M0.8 8.6 Q1.5 6 3.2 6.6 L6.1 8.6 L11.3 1.6 Q12.5 0.6 13.6 0.9 L15.6 2.2 L8 13.3 Q7 14.4 6 13.4 Z" fill="#ec7d44"/></svg><div class="z" style="left:604px">0</div><div class="z" style="left:1118px">0</div></div>
<div class="row" style="top:1042px"><div class="d1">16.12.2021</div><div class="d2">Čtvrtek</div><div class="inp sel" style="left:109px;width:75px"><div class="rd"></div>Směna<div class="tri" style="left:62px"></div></div><div class="inp yel" style="left:190px;width:80px">Start</div><div class="inp yel" style="left:275px;width:80px">Konec</div><div class="inp yel" style="left:361px;width:144px"><div class="rd"></div>Pracoviště<div class="tri" style="left:130px"></div></div><svg class="chk" width="17" height="15" viewBox="0 0 17 15"><path d="M0.8 8.6 Q1.5 6 3.2 6.6 L6.1 8.6 L11.3 1.6 Q12.5 0.6 13.6 0.9 L15.6 2.2 L8 13.3 Q7 14.4 6 13.4 Z" fill="#ec7d44"/></svg><div class="z" style="left:604px">0</div><div class="z" style="left:1118px">0</div></div>
<div class="tdiv" style="left:394px;top:339px;height:728px"></div>
<div class="tdiv" style="left:850px;top:339px;height:728px"></div>
<div class="tdiv" style="left:907px;top:339px;height:728px"></div>
<div class="tdiv" style="left:1363px;top:339px;height:728px"></div>
<div class="tdiv" style="left:1420px;top:339px;height:728px"></div>
<div class="abs" style="left:262px;top:1067px;width:1645px;height:13px;background:#f0f0f0"></div>
<div class="abs" style="left:266px;top:1070px;width:0;height:0;border-top:4px solid transparent;border-bottom:4px solid transparent;border-right:4px solid #a3a3a3"></div>
<div class="abs" style="left:1898px;top:1070px;width:0;height:0;border-top:4px solid transparent;border-bottom:4px solid transparent;border-left:4px solid #a3a3a3"></div>
<div class="abs" style="left:1907px;top:187px;width:13px;height:880px;background:#f1f1f1"></div>
<div class="abs" style="left:1907px;top:1067px;width:13px;height:13px;background:#dcdcdc"></div>
<div class="abs" style="left:1909px;top:200px;width:9.5px;height:341px;background:#c1c1c1"></div>
<div class="abs" style="left:1910px;top:191px;width:0;height:0;border-left:4px solid transparent;border-right:4px solid transparent;border-bottom:4px solid #a3a3a3"></div>
<div class="abs" style="left:1910px;top:1058px;width:0;height:0;border-left:4px solid transparent;border-right:4px solid transparent;border-top:4px solid #505050"></div>
<div class="abs" style="left:1681px;top:299px;width:187px;height:21px;background:#cdcdcd"></div>
<div class="t" style="top:301.50px;font-size:13.2px;line-height:16px;color:#222;left:1689.8px;"><span id="t52" style="transform:scaleX(0.9047)">Celý úvazek</span></div>
<svg class="abs" style="left:1853.5px;top:306px" width="11" height="8" viewBox="0 0 11 8"><path d="M1.2 1.5 L5.5 5.8 L9.8 1.5" fill="none" stroke="#111" stroke-width="1.8"/></svg>
<div class="abs" style="left:1681px;top:320px;width:187px;height:66px;background:#cfcfcf;border:1px solid #9a9a9a;box-shadow:1px 2px 4px rgba(0,0,0,.3)"></div>
<div class="t" style="top:320.50px;font-size:12.5px;line-height:15px;color:#111;font-weight:bold;left:1692px;"><span id="t53" style="transform:scaleX(0.9398)">Úvazky</span></div>
<div class="t" style="top:337.25px;font-size:12.5px;line-height:15px;color:#222;left:1702.8px;"><span id="t54">Vyberte úvazek</span></div>
<div class="abs" style="left:1682px;top:353px;width:185px;height:16px;background:#1e90ff"></div>
<div class="t" style="top:352.50px;font-size:12.5px;line-height:15px;color:#fff;left:1702.8px;"><span id="t55" style="transform:scaleX(0.9693)">Celý úvazek</span></div>
<div class="t" style="top:369.30px;font-size:12.5px;line-height:15px;color:#222;left:1702.8px;"><span id="t56" style="transform:scaleX(0.9899)">DPP Noční služby</span></div>
<div class="abs" style="left:1092px;top:472px;width:412px;height:136px;background:rgba(252,196,30,.93);border:2px solid #000"></div>
<div class="abs" style="left:1092px;top:472px;width:412px;height:136px;text-align:center;font-size:32px;line-height:136px;color:#000">Výběr úvazku</div>
<svg class="abs" style="left:0;top:0" width="1920" height="1080"><line x1="1503" y1="473" x2="1683" y2="310" stroke="#000" stroke-width="2.2"/></svg></body></html>
